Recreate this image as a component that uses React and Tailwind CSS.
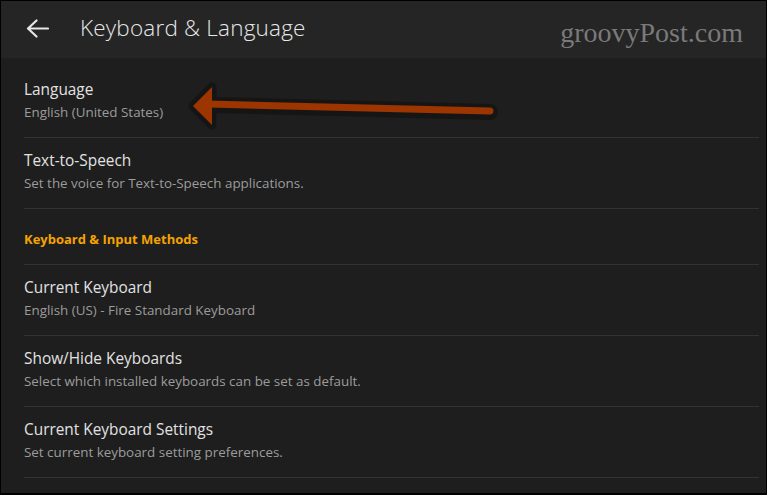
import React from 'react';

const rows = [
  { title: 'Text-to-Speech', sub: 'Set the voice for Text-to-Speech applications.' },
];

const keyboardRows = [
  { title: 'Current Keyboard', sub: 'English (US) - Fire Standard Keyboard' },
  { title: 'Show/Hide Keyboards', sub: 'Select which installed keyboards can be set as default.' },
  { title: 'Current Keyboard Settings', sub: 'Set current keyboard setting preferences.' },
];

const Row = ({ title, sub, first }) => (
  <div className={`${first ? 'pt-[22px]' : 'pt-[13px]'} pb-[15px] border-b border-[#333333]`}>
    <div className="text-[15.4px] leading-[20px] text-[#e2e2e2]">{title}</div>
    <div className="mt-[2px] text-[13.4px] leading-[20px] text-[#9c9c9c]">{sub}</div>
  </div>
);

const App = () => {
  return (
    <div
      className="relative w-[767px] h-[495px] bg-black border-t border-l border-r border-b-2 border-black overflow-hidden"
      style={{ fontFamily: '"Open Sans", "Noto Sans", sans-serif' }}
    >
      <div className="h-full bg-[#1e1e1e]">
        <header className="h-[57px] bg-[#252525] flex items-center">
          <svg className="ml-[25px] mt-[-3px]" width="23" height="19" viewBox="0 0 23 19" fill="none">
            <path d="M2 9.5H22M10.5 1.5L2 9.5L10.5 17.5" stroke="#e6e6e6" strokeWidth="2.2" strokeLinecap="round" strokeLinejoin="round" />
          </svg>
          <h1 className="ml-[31px] mt-[-4px] text-[22.5px] font-light text-[#e8e8e8] tracking-[0.2px]">
            Keyboard &amp; Language
          </h1>
          <div
            className="ml-auto mr-[23px] mt-[6px] text-[28px] text-[#7a7a7a]"
            style={{ fontFamily: '"Liberation Serif", serif' }}
          >
            groovyPost.com
          </div>
        </header>

        <div className="pl-[23px] pr-[7px]">
          <Row first title="Language" sub="English (United States)" />
          {rows.map((r) => (
            <Row key={r.title} {...r} />
          ))}
          <div className="pt-[20px] pb-[15px] border-b border-[#333333]">
            <div className="text-[13px] leading-[20px] font-bold text-[#f5a300]">Keyboard &amp; Input Methods</div>
          </div>
          {keyboardRows.map((r) => (
            <Row key={r.title} {...r} />
          ))}
        </div>
      </div>

      <svg className="absolute left-[-1px] top-[-1px] pointer-events-none" width="767" height="495" viewBox="0 0 767 495">
        <line x1="212" y1="105" x2="490" y2="112" stroke="#151515" strokeWidth="16" strokeLinecap="round" />
        <polygon points="193,106 212,87 212,125" fill="#151515" stroke="#151515" strokeWidth="9" strokeLinejoin="round" />
        <line x1="208" y1="104" x2="490" y2="111" stroke="#9c3500" strokeWidth="7" strokeLinecap="round" />
        <polygon points="193,106 212,87 212,125" fill="#9c3500" />
      </svg>
    </div>
  );
};

export default App;
